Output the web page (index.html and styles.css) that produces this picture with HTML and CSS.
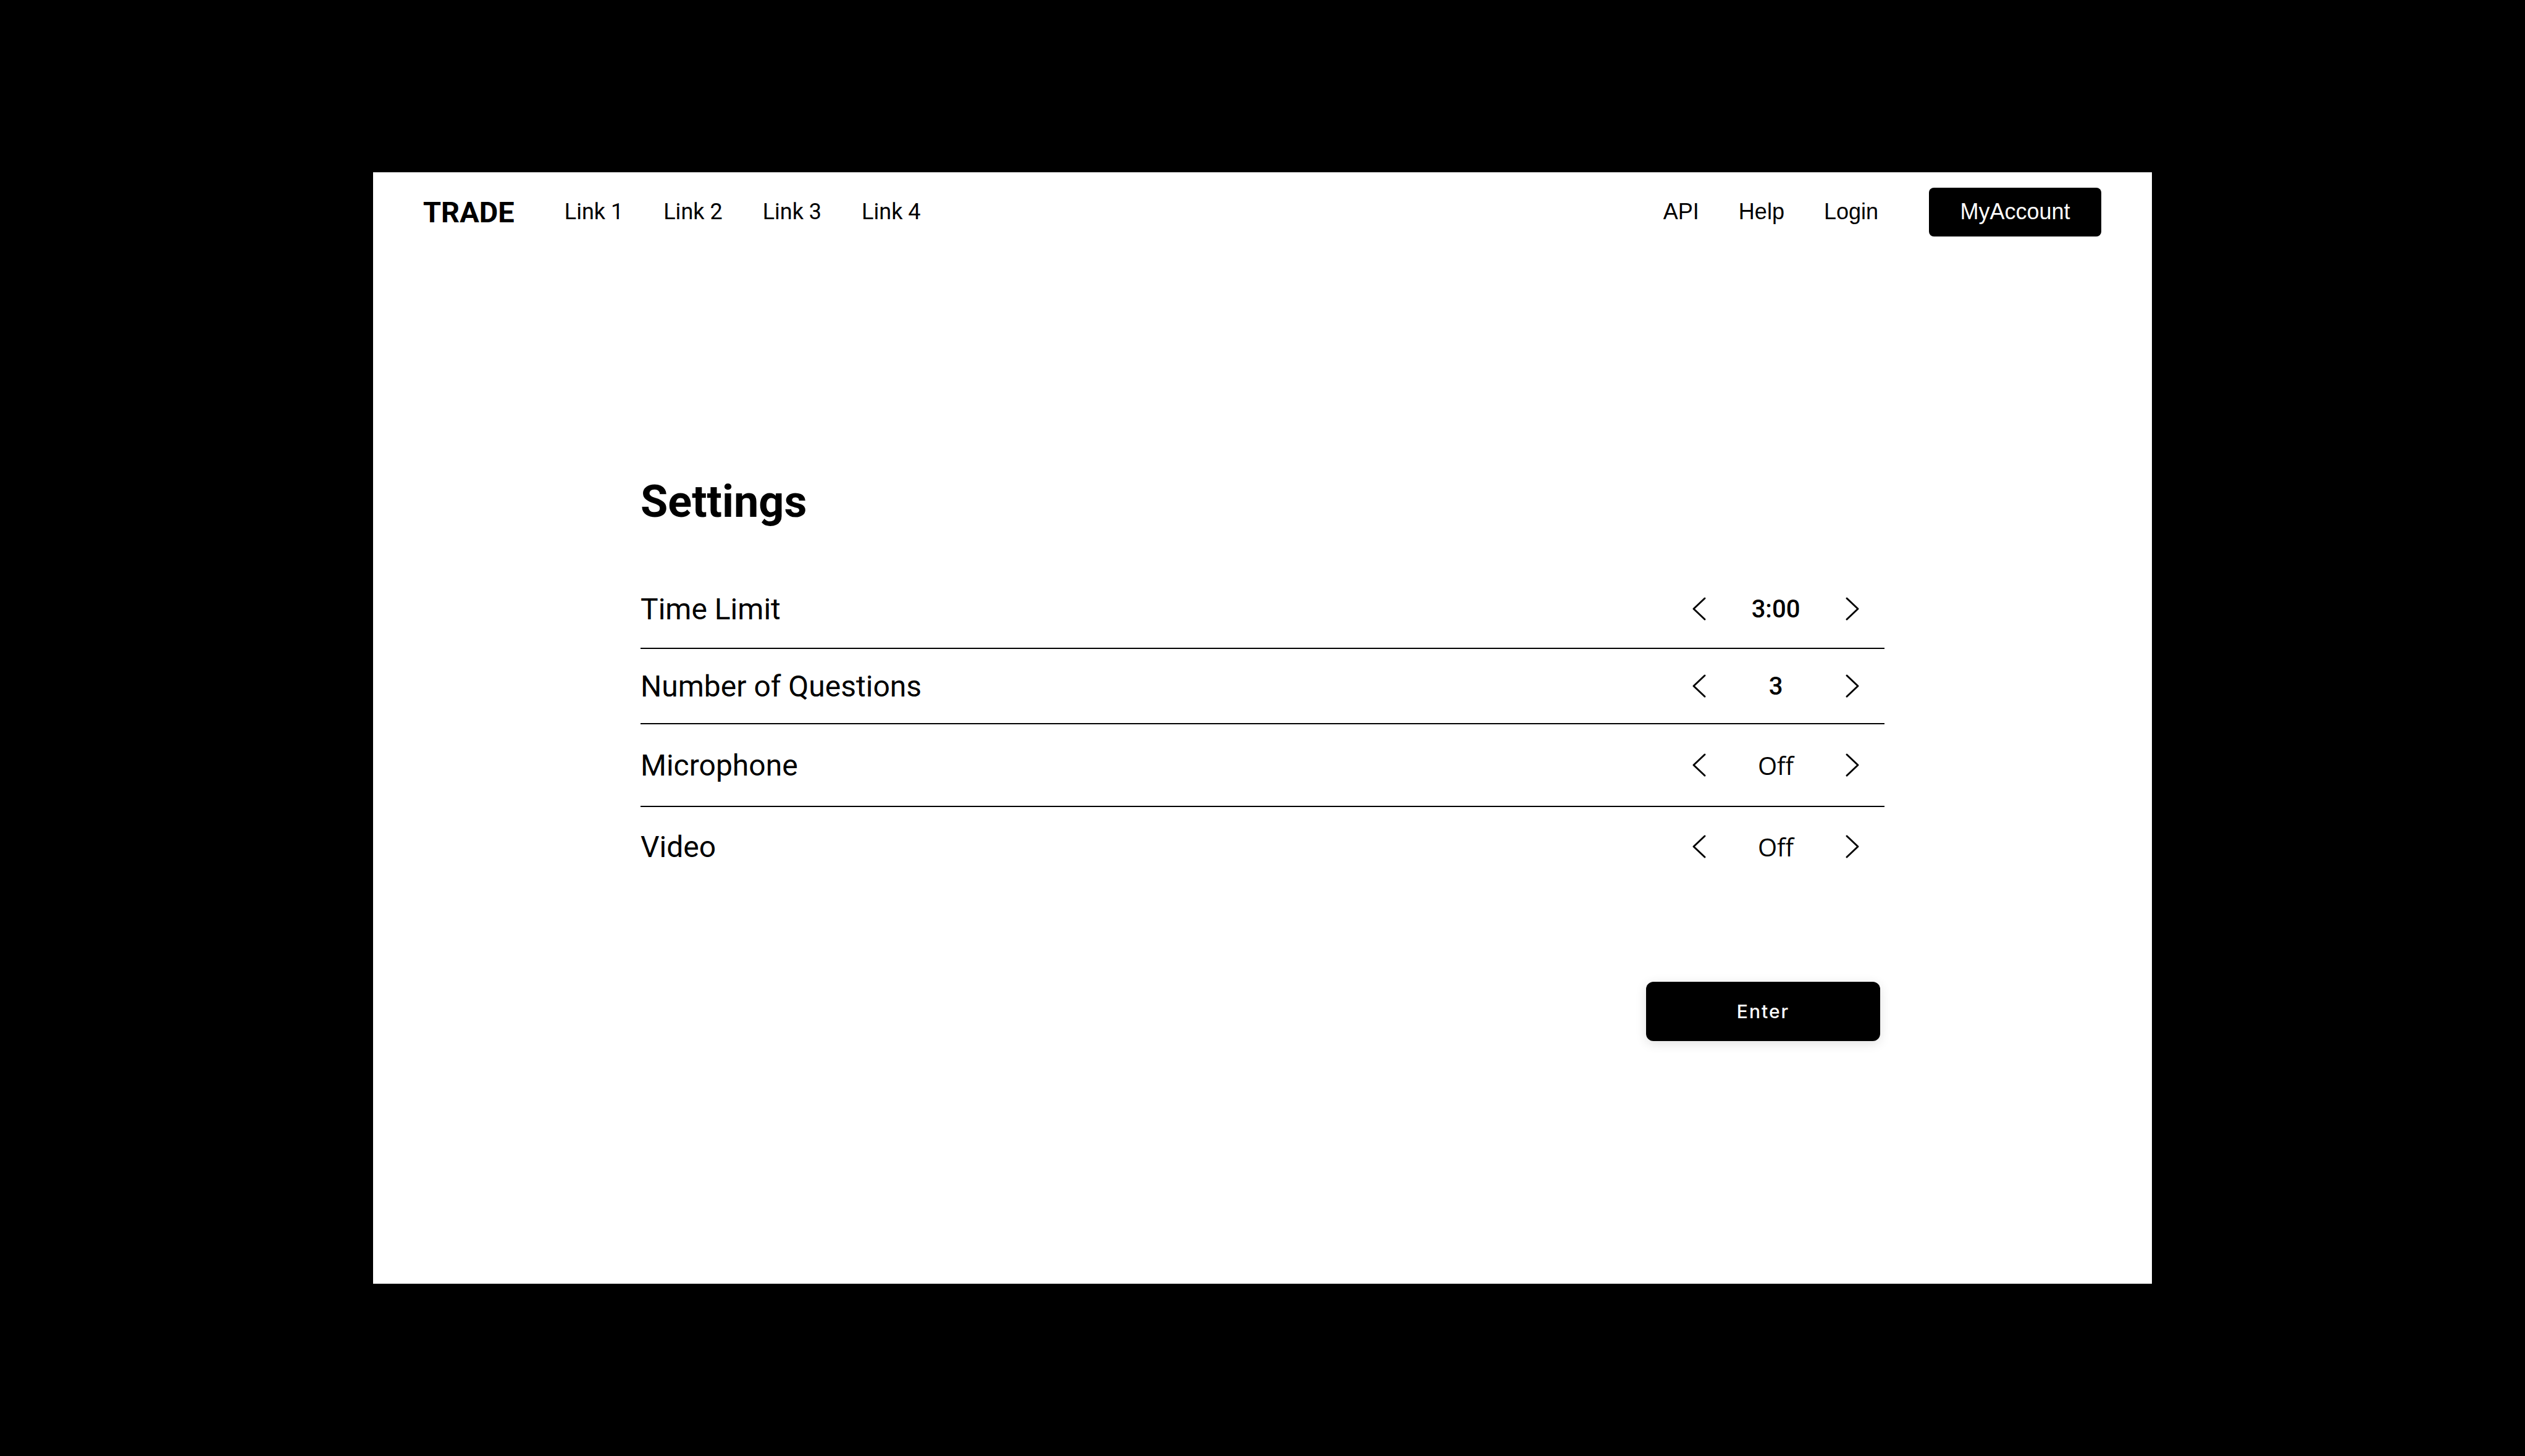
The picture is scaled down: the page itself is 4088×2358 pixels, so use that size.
FILE: index.html
```html
<!DOCTYPE html>
<html lang="en">
<head>
    <meta charset="UTF-8">
    <meta name="viewport" content="width=device-width, initial-scale=1.0">
    <title>TRADE - Settings</title>
    <link rel="stylesheet" href="styles.css">
</head>
<body>
    <div class="page">
        <nav class="navbar">
            <div class="nav-left">
                <span class="brand">TRADE</span>
                <a href="#" class="nav-link">Link 1</a>
                <a href="#" class="nav-link">Link 2</a>
                <a href="#" class="nav-link">Link 3</a>
                <a href="#" class="nav-link">Link 4</a>
            </div>
            <div class="nav-right">
                <a href="#" class="nav-link-alt">API</a>
                <a href="#" class="nav-link-alt">Help</a>
                <a href="#" class="nav-link-alt">Login</a>
                <a href="#" class="account-btn">MyAccount</a>
            </div>
        </nav>

        <main class="settings">
            <h1>Settings</h1>

            <div class="setting-row">
                <span class="setting-label">Time Limit</span>
                <div class="stepper">
                    <button class="arrow">
                        <svg width="24" height="40" viewBox="0 0 24 40"><path d="M21 3 L3 20 L21 37"/></svg>
                    </button>
                    <span class="value value-num">3:00</span>
                    <button class="arrow">
                        <svg width="24" height="40" viewBox="0 0 24 40"><path d="M3 3 L21 20 L3 37"/></svg>
                    </button>
                </div>
            </div>

            <div class="setting-row short">
                <span class="setting-label">Number of Questions</span>
                <div class="stepper">
                    <button class="arrow">
                        <svg width="24" height="40" viewBox="0 0 24 40"><path d="M21 3 L3 20 L21 37"/></svg>
                    </button>
                    <span class="value value-num">3</span>
                    <button class="arrow">
                        <svg width="24" height="40" viewBox="0 0 24 40"><path d="M3 3 L21 20 L3 37"/></svg>
                    </button>
                </div>
            </div>

            <div class="setting-row tall">
                <span class="setting-label">Microphone</span>
                <div class="stepper">
                    <button class="arrow">
                        <svg width="24" height="40" viewBox="0 0 24 40"><path d="M21 3 L3 20 L21 37"/></svg>
                    </button>
                    <span class="value value-text">Off</span>
                    <button class="arrow">
                        <svg width="24" height="40" viewBox="0 0 24 40"><path d="M3 3 L21 20 L3 37"/></svg>
                    </button>
                </div>
            </div>

            <div class="setting-row no-border">
                <span class="setting-label">Video</span>
                <div class="stepper">
                    <button class="arrow">
                        <svg width="24" height="40" viewBox="0 0 24 40"><path d="M21 3 L3 20 L21 37"/></svg>
                    </button>
                    <span class="value value-text">Off</span>
                    <button class="arrow">
                        <svg width="24" height="40" viewBox="0 0 24 40"><path d="M3 3 L21 20 L3 37"/></svg>
                    </button>
                </div>
            </div>

            <div class="actions">
                <button class="enter-btn">Enter</button>
            </div>
        </main>
    </div>
</body>
</html>
```

FILE: styles.css
```css
body {
    margin: 0;
    background: #000;
    font-family: Roboto, "Liberation Sans", sans-serif;
    color: #000;
    display: flex;
    justify-content: center;
    align-items: center;
    min-height: 100vh;
}

.page {
    background: white;
    width: 2880px;
    height: 1800px;
}

/* Navbar */
.navbar {
    height: 128px;
    padding: 0 82px 0 81px;
    display: flex;
    justify-content: space-between;
    align-items: center;
}

.nav-left {
    display: flex;
    align-items: center;
    gap: 65px;
}

.brand {
    font-weight: 700;
    font-size: 47px;
    margin-right: 16px;
}

.nav-link {
    font-size: 36px;
    color: #000;
    text-decoration: none;
}

.nav-right {
    display: flex;
    align-items: center;
    gap: 64px;
}

.nav-link-alt {
    font-family: "Liberation Sans", Arial, sans-serif;
    font-size: 36px;
    color: #000;
    text-decoration: none;
}

.account-btn {
    font-family: "Liberation Sans", Arial, sans-serif;
    font-size: 36px;
    color: white;
    background: #000;
    text-decoration: none;
    height: 79px;
    width: 279px;
    margin-left: 18px;
    border-radius: 8px;
    display: flex;
    justify-content: center;
    align-items: center;
}

/* Settings */
.settings {
    width: 2014px;
    margin: 0 auto;
    padding-top: 364px;
}

h1 {
    font-size: 72px;
    font-weight: 700;
    line-height: 84px;
    margin: 0 0 68px;
}

.setting-row {
    height: 128px;
    box-sizing: border-box;
    border-bottom: 2px solid #000;
    display: flex;
    justify-content: space-between;
    align-items: center;
}

.setting-row.short {
    height: 122px;
}

.setting-row.tall {
    height: 134px;
}

.setting-row.no-border {
    border-bottom: none;
}

.setting-label {
    font-size: 48px;
}

.stepper {
    display: flex;
    align-items: center;
    margin-right: 32px;
}

.arrow {
    width: 40px;
    height: 40px;
    padding: 0;
    border: none;
    background: none;
    display: flex;
    justify-content: center;
    align-items: center;
    cursor: pointer;
}

.arrow svg path {
    fill: none;
    stroke: #000;
    stroke-width: 3;
    stroke-linecap: round;
    stroke-linejoin: round;
}

.value {
    width: 208px;
    text-align: center;
    font-size: 40px;
}

.value-num {
    font-weight: 500;
}

.value-text {
    font-family: "Open Sans", "Noto Sans", sans-serif;
}

.actions {
    display: flex;
    justify-content: flex-end;
    padding-right: 7px;
    margin-top: 155px;
}

.enter-btn {
    width: 379px;
    height: 96px;
    background: #000;
    color: white;
    border: none;
    border-radius: 12px;
    font-family: Inter, "Open Sans", sans-serif;
    font-weight: 500;
    font-size: 30px;
    letter-spacing: 2px;
    box-shadow: 0 4px 18px rgba(0,0,0,0.12);
    cursor: pointer;
}
```
